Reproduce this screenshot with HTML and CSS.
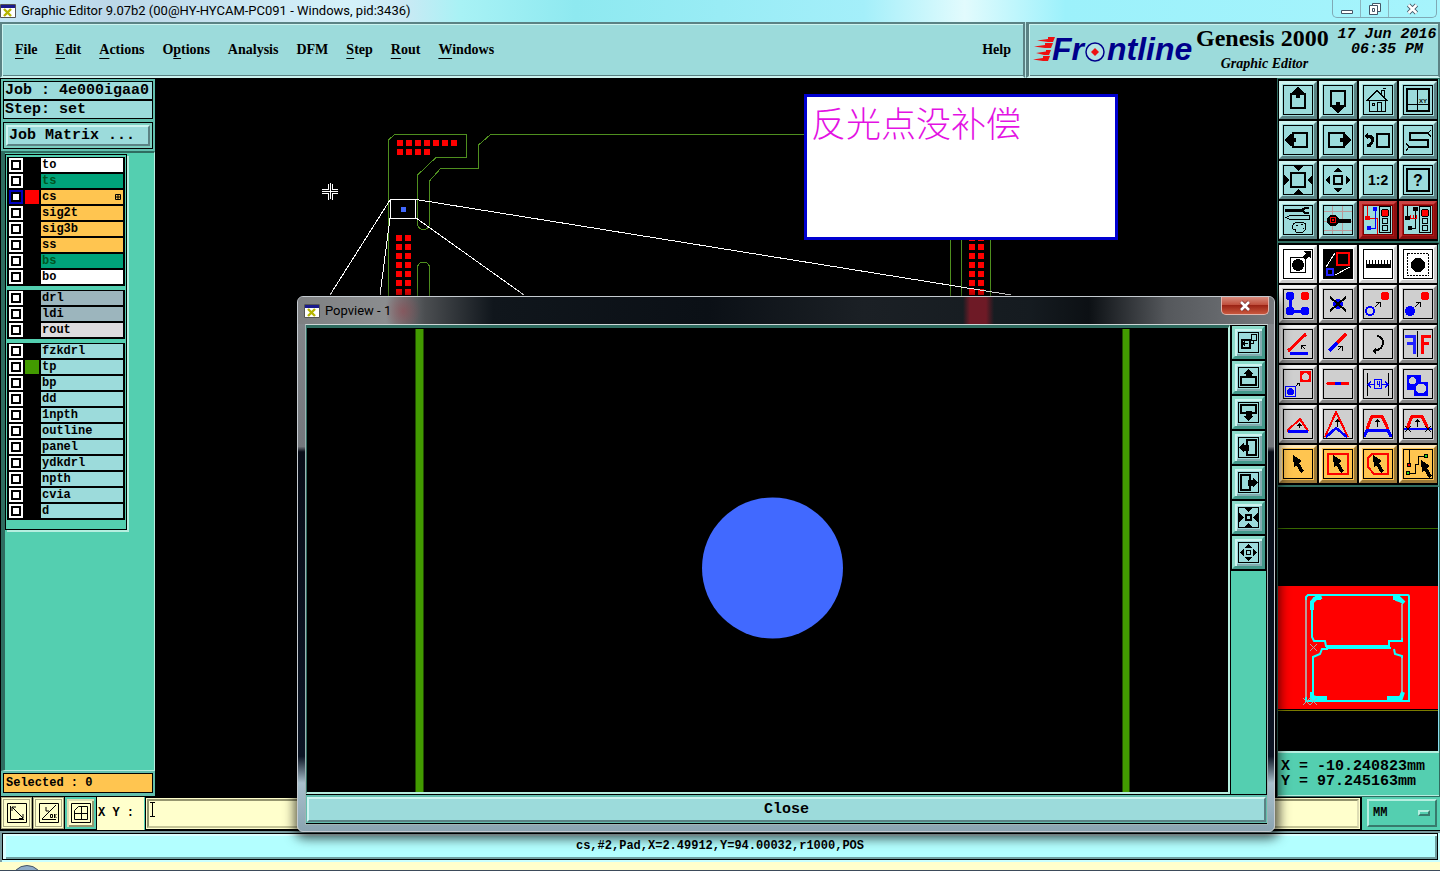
FILE: index.html
```html
<!DOCTYPE html>
<html lang="en">
<head>
<meta charset="utf-8">
<title>Graphic Editor 9.07b2</title>
<link rel="stylesheet" href="styles.css">
</head>
<body>
<svg class="defs" aria-hidden="true">
  <defs>
    <symbol id="app" viewBox="0 0 16 14"><path fill="#fff" stroke="#555" d="M.5.5h15v13H.5z"/><path fill="#1a1a8c" d="M1 1h14v3H1z"/><path stroke="#b5b500" stroke-width="2.4" d="m4 5 7 7m0-7-7 7"/></symbol>
    <symbol id="pointer" viewBox="0 0 30 30"><path d="m10 6 9 6-3 2 5 8-3 2-5-8-2 3z"/></symbol>
    <symbol id="light" viewBox="0 0 12 28"><path fill="#9cdbdb" stroke="#000" d="M.5.5h11v26H.5z"/><circle cx="6" cy="7" r="4" fill="#f00" stroke="#000"/><circle cx="6" cy="15" r="3" fill="none" stroke="#000"/><circle cx="6" cy="22" r="3" fill="none" stroke="#000"/></symbol>
  </defs>
</svg>

<header class="titlebar">
  <svg class="app-icon"><use href="#app"/></svg>
  <h1 class="window-title">Graphic Editor 9.07b2 (00@HY-HYCAM-PC091 - Windows, pid:3436)</h1>
  <div class="window-controls">
    <button aria-label="Minimize"><svg width="14" height="14"><path fill="#fff" stroke="#456" d="M1.500 8.500h11v3h-11z"/></svg></button>
    <button aria-label="Restore"><svg width="14" height="14"><path fill="#fff" stroke="#456" d="M4.500 1.500h8v8h-8z"/><path fill="#fff" stroke="#456" d="M1.500 3.500h8v9h-8zm3 3h2v3h-2z"/></svg></button>
    <button class="wide" aria-label="Exit"><svg width="14" height="14"><path stroke="#456" stroke-width="4.500" d="m2.500 3 8 8m0-8-8 8"/><path stroke="#fff" stroke-width="2.500" d="m2.500 3 8 8m0-8-8 8"/></svg></button>
  </div>
</header>

<div class="topbar">
  <nav class="menubar">
    <button><u>F</u>ile</button><button><u>E</u>dit</button><button><u>A</u>ctions</button><button>O<u>p</u>tions</button><button>Analysis</button><button>DFM</button><button><u>S</u>tep</button><button><u>R</u>out</button><button><u>W</u>indows</button><button class="help">Help</button>
  </nav>
  <div class="brand">
    <svg class="logo" viewBox="0 -6 160 44" role="img" aria-label="Frontline">
      <g fill="#e11"><path d="M4 4.500 15 3V1h7l-2 5h-5z"/><path d="M1 10.500 12 9V7h8l-2 5h-6z"/><path d="M3 17l10-1.500V14h5l-2 5h-5z"/><path d="M0 23.500 10 22v-2h7l-2 5h-5z"/></g>
      <g fill="#00008b"><text x="19" y="24">Fr</text><text x="74" y="24">ntline</text></g>
      <circle cx="62" cy="16" r="9" fill="#b5e4e4" stroke="#00008b" stroke-width="1.500"/><path fill="#e11" d="m62 12 4 4-4 4-4-4z"/>
    </svg>
    <div class="product"><strong>Genesis 2000</strong><em>Graphic Editor</em></div>
    <time class="clock">17 Jun 2016<br>06:35 PM</time>
  </div>
</div>

<main class="workspace">
  <aside class="left-panel">
    <div class="field">Job : 4e000igaa0</div>
    <div class="field">Step: set</div>
    <div class="matrix"><button>Job Matrix ...</button></div>
    <div class="layers">
      <div class="layer-box">
        <div class="group">
          <label class="white"><input type="checkbox"><i></i><span>to</span></label>
          <label class="green"><input type="checkbox"><i></i><span>ts</span></label>
          <label class="orange"><input type="checkbox" checked><i class="red"></i><span>cs<svg class="mark" width="6" height="6"><path fill="none" stroke="#000" d="M.5.5h5v5h-5zM3 0v6M0 3h6"/></svg></span></label>
          <label class="orange"><input type="checkbox"><i></i><span>sig2t</span></label>
          <label class="orange"><input type="checkbox"><i></i><span>sig3b</span></label>
          <label class="orange"><input type="checkbox"><i></i><span>ss</span></label>
          <label class="green"><input type="checkbox"><i></i><span>bs</span></label>
          <label class="white"><input type="checkbox"><i></i><span>bo</span></label>
        </div>
        <div class="group">
          <label class="slate"><input type="checkbox"><i></i><span>drl</span></label>
          <label class="slate"><input type="checkbox"><i></i><span>ldi</span></label>
          <label class="gray"><input type="checkbox"><i></i><span>rout</span></label>
        </div>
        <div class="group">
          <label><input type="checkbox"><i></i><span>fzkdrl</span></label>
          <label><input type="checkbox"><i class="leaf"></i><span>tp</span></label>
          <label><input type="checkbox"><i></i><span>bp</span></label>
          <label><input type="checkbox"><i></i><span>dd</span></label>
          <label><input type="checkbox"><i></i><span>1npth</span></label>
          <label><input type="checkbox"><i></i><span>outline</span></label>
          <label><input type="checkbox"><i></i><span>panel</span></label>
          <label><input type="checkbox"><i></i><span>ydkdrl</span></label>
          <label><input type="checkbox"><i></i><span>npth</span></label>
          <label><input type="checkbox"><i></i><span>cvia</span></label>
          <label><input type="checkbox"><i></i><span>d</span></label>
        </div>
      </div>
    </div>
    <div class="selected">Selected : 0</div>
  </aside>

  <section class="canvas">
    <svg class="board" shape-rendering="crispEdges">
      <g transform="translate(-155 -78)" fill="none">
        <g stroke="#4f8f1f">
          <path d="M388.500 320V140l6-5.500h72v23H436L417.500 175v50q1 4 6 4.500 5-.5 6-5V181l11-12.500h38V145l12-10.500h315"/>
          <path d="M417.500 320v-53q1-5 6-5t6 5v53M950.500 239v80M961.500 239v80M990.500 239v80"/>
        </g>
        <g stroke="#f00" stroke-width="6">
          <path stroke-dasharray="6 3" d="M397 143h60M397 152h33"/>
          <path stroke-dasharray="6 3" d="M399 235v60M408 235v60M972 235v60M981 235v60"/>
        </g>
        <path stroke="#fff" d="M390.500 199.500h25v19h-25zM390 200l-60 95M390 218l-10 77M416 199.500 1011 295M416 218l108 77"/>
        <path fill="#4169ff" d="M401 207h5v5h-5z"/>
        <path stroke="#fff" d="M322 189.500h6v-6M322 193.500h6v6M338 189.500h-6v-6M338 193.500h-6v6M322 191.500h16M330.500 183v16"/>
      </g>
    </svg>
    <p class="note" lang="zh">反光点没补偿</p>
  </section>

  <aside class="right-panel">
    <div class="tools">
      <button aria-label="Pan up"><svg><path class="b2" d="M8 9h14v14H8z"/><path d="M15 2l6 5v2h-4v4h-4V9H9V7z"/></svg></button>
      <button aria-label="Pan down"><svg><path class="b2" d="M8 6h14v15H8z"/><path d="M15 28l6-5v-2h-4v-4h-4v4H9v2z"/></svg></button>
      <button aria-label="Home"><svg><path class="b1" d="M4 15.500 14 5.500l10 10zM6.500 15v11.500h16V15M14.500 26v-8.500h4V26M9.500 18.500h2v2h-2zM18.500 9V5.500h3V12M20 3.500h3"/></svg></button>
      <button aria-label="Coordinates"><svg><path class="b2" d="M4 4h22v22H4z"/><path class="b1" d="M14.500 3v24M3 19.500h23"/><text x="16" y="18" font-size="6">XY</text></svg></button>
      <button aria-label="Pan left"><svg><path class="b2" d="M10 8h14v14H10z"/><path d="M2 15l5-6h2v4h4v4H9v4H7z"/></svg></button>
      <button aria-label="Pan right"><svg><path class="b2" d="M6 8h15v14H6z"/><path d="M28 15l-5-6h-2v4h-4v4h4v4h2z"/></svg></button>
      <button aria-label="Previous view"><svg><path class="b2" d="M14 9h12v13H14z"/><path fill="none" stroke="#000" stroke-width="3" d="M4 11h3l2 2v4l-2 3H4"/><path d="M1 11l4-4v8z"/></svg></button>
      <button aria-label="Serpentine"><svg><path class="b2" d="M25 8H7v7h18v7H6"/><path class="b1" d="m28 5-3 3 3 4M3 18l3 4-3 4"/></svg></button>
      <button aria-label="Zoom in"><svg><path class="b2" d="M8 8h14v14H8z"/><path d="M10 1h10l-5 5zM10 29h10l-5-5zM1 10v10l5-5zM29 10v10l-5-5z"/></svg></button>
      <button aria-label="Zoom out"><svg><path class="b2" d="M11 11h8v8h-8z"/><path d="M10 7h10l-5-4zM10 23h10l-5 4zM7 10v10l-4-5zM23 10v10l4-5z"/></svg></button>
      <button aria-label="Actual scale"><svg><text x="5" y="20" font-size="14">1:2</text></svg></button>
      <button aria-label="Query"><svg><path class="b2" d="M4 4h22v22H4z"/><text x="10" y="21" font-size="16">?</text></svg></button>
      <button aria-label="Settings"><svg><path d="M2 4h17v3H2z"/><path fill="none" stroke="#000" stroke-width="2" d="M26 3h-4l-3 2 3 3h4"/><path class="b1" d="M3 12.500l4-2h19v4H7zM10 24q-2-7 6-7 8 0 7 5-1 6-7 6-4 0-3-3zM13 20.500h2M18 19.500h2M20 23.500h1"/></svg></button>
      <button aria-label="Snap"><svg><path stroke="#b99" d="M9.500 0v30M19.500 0v30M0 6.500h30M0 16.500h30M0 25.500h30"/><circle cx="10" cy="15.500" r="6"/><path d="M10 14h18v4H10z"/><path fill="none" stroke="#e00" d="M7.500 12.500h5v5h-5zM9.500 14.500h1v1h-1z"/></svg></button>
      <button class="alert" aria-label="Stop on net"><svg><path fill="none" stroke="#e00" d="M4.500 0v13.500h10V29"/><path fill="none" stroke="#00f" d="M12.500 4v19.500H6"/><circle cx="4.500" cy="13" r="2.500" fill="#e00"/><circle cx="12" cy="4" r="2.500" fill="#00f"/><circle cx="6" cy="23" r="2.500" fill="#00f"/><use href="#light" x="16" y="1" width="12" height="28"/></svg></button>
      <button class="alert" aria-label="Stop on error"><svg><path class="b1" d="M4.500 0v13M12.500 4v19.500H8"/><path fill="none" stroke="#e00" d="M6 13.500h8M7.500 10v4M10.500 10v4M13.500 10v4"/><circle cx="4.500" cy="13" r="2.500"/><circle cx="12.500" cy="4" r="2.500"/><circle cx="7" cy="23" r="2.500"/><use href="#light" x="16" y="1" width="12" height="28"/></svg></button>
    </div>
    <div class="tools gray-tools">
      <button class="on" aria-label="Select feature"><svg><path class="b1" d="M7.500 8.500h15v15h-15z"/><circle cx="15" cy="16" r="6"/><path d="M19 8l4-4-3-2h8v8l-2-3-4 4z"/></svg></button>
      <button class="on" aria-label="Popview"><svg><path d="M0 0h30v30H0z"/><path fill="none" stroke="#f00" stroke-width="2" d="M14 4h12v12H14z"/><path fill="none" stroke="#22f" stroke-width="2" d="M4 20h6v6H4z"/><path stroke="#fff" d="m3 18 9-14M12 26l15-8"/></svg></button>
      <button class="on" aria-label="Measure"><svg><path d="M3 15h25v4H3z"/><path stroke="#000" stroke-width="5" stroke-dasharray="1 2" d="M3 13h25"/></svg></button>
      <button class="on" aria-label="Area select"><svg><path class="b1" stroke-dasharray="2 1" d="M4.500 4.500h21v22h-21z"/><circle cx="15" cy="16" r="7"/></svg></button>
      <button aria-label="Net"><svg><path fill="none" stroke="#00f" stroke-width="3" d="M7 7v15h15"/><g fill="#00f"><circle cx="7" cy="7" r="4.500"/><circle cx="7" cy="22" r="4.500"/><circle cx="22" cy="22" r="4.500"/></g><circle cx="22" cy="7" r="4.500" fill="#f00"/></svg></button>
      <button aria-label="Delete"><svg><circle cx="15" cy="15" r="5" fill="#00f"/><path stroke="#000" stroke-width="2" d="m7 8 16 14M23 8 7 22"/></svg></button>
      <button aria-label="Move"><svg><circle cx="22" cy="7" r="4.500" fill="#f00"/><circle cx="7" cy="22" r="4" fill="none" stroke="#00f" stroke-width="2"/><path class="b1" d="m12 18 5-5m-4 0.500h4v4"/></svg></button>
      <button aria-label="Copy"><svg><circle cx="22" cy="7" r="4.500" fill="#f00"/><circle cx="7" cy="22" r="5" fill="#00f"/><path class="b1" d="m12 18 5-5m-4 0.500h4v4"/></svg></button>
      <button aria-label="Angle"><svg><path stroke="#f00" stroke-width="3" d="M5 22 23 5"/><path stroke="#00f" stroke-width="3" d="M7 24.500h18"/><path class="b1" d="m22 20-4-4m0.500 4v-4h4"/></svg></button>
      <button aria-label="Extend"><svg><path stroke="#f00" stroke-width="3" d="m14 14 9-9"/><path stroke="#00f" stroke-width="3" d="m6 22 8-8"/><path class="b1" d="m15 21 4-4m-4 0.500h4v4"/></svg></button>
      <button aria-label="Rotate"><svg><path fill="none" stroke="#000" stroke-width="2" d="M14 7q6 1 6 7t-9 8"/><path d="m9 22 4-4v7z"/></svg></button>
      <button aria-label="Mirror"><svg><path fill="none" stroke="#22f" stroke-width="3" d="M2 7.500h9V25M4 14.500h7"/><path class="b1" d="M14.500 2v26"/><path fill="none" stroke="#f00" stroke-width="3" d="M28 7.500h-9V25M26 14.500h-7"/></svg></button>
      <button aria-label="Resize"><svg><path fill="#f00" d="M17 2h11v11H17z"/><circle cx="22.500" cy="7.500" r="3.500" fill="#cfcfcf"/><path fill="none" stroke="#00f" d="M2.500 17.500h10v10h-10z"/><circle cx="7.500" cy="22.500" r="3.500" fill="#00f"/><path class="b1" d="m13 17 3-3m-2 0.500h2v2"/></svg></button>
      <button aria-label="Break"><svg><path stroke="#f00" stroke-width="3" stroke-linecap="round" d="M5 14.500h20"/><path stroke="#00f" stroke-width="3" d="M12 14.500h6"/></svg></button>
      <button aria-label="Spacing"><svg><path class="b1" d="M4.500 4v23M25.500 4v23"/><path fill="none" stroke="#00f" d="M11.500 10.500h7v9h-7zM5 15.500h6M19 15.500h6M8 12.500l-3 3 3 3M22 12.500l3 3-3 3M14.500 12v3.500h2V12m0 3v3"/></svg></button>
      <button aria-label="Union"><svg><path fill="#00f" d="M4 6h14v7h7v14H11v-6H4z"/><circle cx="9.500" cy="11.500" r="3.500" fill="#cfcfcf"/><circle cx="18" cy="19.500" r="5" fill="#cfcfcf"/></svg></button>
      <button aria-label="Low slope"><svg><path fill="none" stroke="#f00" stroke-width="2" d="m4 22 13-12 8 12"/><path stroke="#00f" stroke-width="3" d="M5 22.500h20"/><path class="b1" d="M16.500 19v-4m-2 2 2-2 2 2"/></svg></button>
      <button aria-label="High slope"><svg><path fill="none" stroke="#f00" stroke-width="2" d="M2 28 13 3l12 25"/><path fill="none" stroke="#00f" stroke-width="2.500" d="m3 28 10-9 11 9"/><path class="b1" d="M14.500 18v-7m-2 2 2-2 2 2"/></svg></button>
      <button aria-label="Trapezoid"><svg><path fill="none" stroke="#f00" stroke-width="3" d="M4 20 9 7h10l6 13"/><path fill="none" stroke="#00f" stroke-width="3" d="m1 28 3-7h21l3 7"/><path class="b1" d="M14.500 18v-7m-2 2 2-2 2 2"/></svg></button>
      <button aria-label="Cut trapezoid"><svg><path fill="none" stroke="#f00" stroke-width="3" d="M4 20 9 7h10l6 13"/><path stroke="#00f" stroke-width="2" d="M0 20h30"/><path class="b1" d="M14.500 18v-7m-2 2 2-2 2 2M2 17l6 6m0-6-6 6M22 17l6 6m0-6-6 6"/></svg></button>
      <button class="gold" aria-label="Select"><svg><use href="#pointer" width="30" height="30"/></svg></button>
      <button class="gold" aria-label="Select in rectangle"><svg><path fill="none" stroke="#f00" stroke-width="2" d="M5 5h20v20H5z"/><use href="#pointer" width="30" height="30"/></svg></button>
      <button class="gold" aria-label="Select in polygon"><svg><path fill="none" stroke="#f00" stroke-width="2" d="M9 5h16v20H11l-6-7V9z"/><use href="#pointer" width="30" height="30"/></svg></button>
      <button class="gold" aria-label="Select net"><svg><path class="b1" d="M6.500 0v16M6 24.500h6.500v-9h3v-8H23"/><g stroke="#000"><circle cx="23" cy="7" r="2" fill="#2d2"/><circle cx="5" cy="24" r="2" fill="#2d2"/><circle cx="6" cy="16" r="2" fill="#e00"/></g><use href="#pointer" x="8" y="5" width="30" height="30"/></svg></button>
    </div>
    <div class="overview">
      <svg viewBox="0 0 160 125" preserveAspectRatio="none">
        <path fill="#f00" d="M0 0h160v123H0z"/><path stroke="#7b7b00" d="M0 124.500h160"/>
        <g fill="none" stroke="#1ff" stroke-width="2">
          <path d="M28 14v-3l2-2h100q1 0 1 2v104H28v-4M42 9l1 3h-7l-2 4v35l2 4h11l1 5h63v-5h13v-4M117 9l1 5 6 2M48 62h65M124 72v-2l-7-2-1-5M50 63h-6l-2 5-7 3v39l6 2h8M110 114v-3h12l2-4"/>
        </g>
        <path fill="none" stroke="#b99" stroke-width="2" d="M28 14v97M124 18v34M124 72v36"/>
        <path fill="none" stroke="#1ff" stroke-width="4" d="M34 24v-8l4-4h5M115 12h6l5 5M34 106v6h15M109 112h14l2-6"/>
        <path fill="none" stroke="#aaa" d="m32 58 7 7m0-7-7 7M25 112l7 7m0-7-7 7M32 112l7 7m0-7-7 7"/>
      </svg>
    </div>
    <output class="position">X = -10.240823mm<br>Y = 97.245163mm</output>
  </aside>
</main>

<form class="entry">
  <button type="button" class="mode" aria-label="Diagonal"><svg width="20" height="20"><path fill="none" stroke="#000" d="M.5.500h19v19H.5zM3.500 3v13.500H17M5 4l11 11M5 8V4h4M12 15.500h4V11"/></svg></button>
  <button type="button" class="mode" aria-label="Angle mode"><svg width="20" height="20"><path fill="none" stroke="#000" d="M.5.500h19v19H.5zM3 16.500h14M3 16 17 2M7 4v4h3M11.500 11.500h2v3h-2zM15.500 11v4m2-4-2 2 2 2"/></svg></button>
  <button type="button" class="mode active" aria-label="Grid mode"><svg width="20" height="20"><path fill="none" stroke="#000" d="M.5.500h19v19H.5zM3.500 16.500v-9l4-4h9v13zM10.500 3v14M3 10.500h14"/></svg></button>
  <label for="xy">X Y :</label>
  <input id="xy" type="text">
  <div class="unit"><button type="button">MM<i></i></button></div>
</form>
<footer class="status"><p>cs,#2,Pad,X=2.49912,Y=94.00032,r1000,POS</p></footer>
<div class="taskbar"><i></i></div>
<svg class="caret" width="7" height="16" shape-rendering="crispEdges"><path stroke="#000" fill="none" d="M1 .5h5M1 14.500h5M3.500 0v15"/></svg>

<section class="popview">
  <header><svg class="app-icon"><use href="#app"/></svg><h2>Popview - 1</h2><button aria-label="Close window"><svg width="12" height="12"><path stroke="#733" stroke-width="4" d="m2 2 8 8m0-8-8 8"/><path stroke="#fff" stroke-width="2.500" d="m2 2 8 8m0-8-8 8"/></svg></button></header>
  <div class="pop-body">
    <div class="pop-main">
      <svg class="pop-view" viewBox="0 0 920 464"><path fill="#429a00" d="M108 1h8v463h-8zM815 1h7v463h-7z"/><circle cx="465" cy="240" r="70.500" fill="#4169ff"/></svg>
      <div class="pop-tools">
        <button aria-label="Link view"><svg><path class="b2" d="M4 8h8v8H4z"/><path class="b1" d="M13.500 2.500h5v6h-5zM12 11.500h3.500V9M10 11.500H5m2-2-2 2 2 2"/></svg></button>
        <button aria-label="Up"><svg><path class="b2" d="M3 10h15v8H3z"/><path d="m10.500 2 5 5h-2v4h-6V7h-2z"/></svg></button>
        <button aria-label="Down"><svg><path class="b2" d="M3 3h15v8H3z"/><path d="m10.500 19 5-5h-2V9h-6v5h-2z"/></svg></button>
        <button aria-label="Left"><svg><path class="b2" d="M9 3h9v15H9z"/><path d="m1 10.500 5-5v2h5v6H6v2z"/></svg></button>
        <button aria-label="Right"><svg><path class="b2" d="M3 3h9v15H3z"/><path d="m20 10.500-5-5v2h-5v6h5v2z"/></svg></button>
        <button aria-label="In"><svg><path class="b2" d="M8 8h5v5H8z"/><path d="M6 1h9l-4.500 4zM6 20h9l-4.500-4zM1 6v9l5-4.500zM20 6v9l-5-4.500z"/></svg></button>
        <button aria-label="Out"><svg><path class="b1" d="M8.500 8.500h4v4h-4z"/><path d="M7 6h7l-3.500-4zM7 15h7l-3.500 4zM6 7v7l-4-3.500zM15 7v7l4-3.500z"/></svg></button>
      </div>
    </div>
    <div class="pop-close"><button>Close</button></div>
  </div>
</section>
</body>
</html>
```

FILE: styles.css
```css
* { box-sizing: border-box; }
:root {
  --teal: #54cfb0;
  --aqua: #9cdbdb;
  --light: #cdf4f0;
  --dark: #5b8284;
  --cream: #ffffcc;
  --mono: "Liberation Mono", monospace;
  --serif: "Liberation Serif", serif;
}
body {
  margin: 0;
  height: 100vh;
  min-height: 640px;
  display: flex;
  flex-direction: column;
  position: relative;
  overflow: hidden;
  background: #000;
  color: #000;
  font-family: var(--mono);
  font-weight: bold;
}
button { font: inherit; color: inherit; padding: 0; margin: 0; border: 0; background: none; }
h1, h2, p { margin: 0; }
.defs { position: absolute; width: 0; height: 0; }
.app-icon { width: 16px; height: 14px; flex: none; }

.titlebar {
  height: 22px;
  flex: none;
  display: flex;
  align-items: center;
  gap: 5px;
  background: linear-gradient(90deg, #c4e6f5 0, #bcd7e8 8%, #d5f2fa 24%, #cbe9f4 28%, #a8f2f5 32%, #8ee9f0 40%, #a4effa 60%, #e2fbfd 67%, #9cf1fb 74%, #a6f4fc 100%);
}
.window-title { flex: 1; font: 13px/20px Roboto, "Open Sans", sans-serif; }
.window-controls { display: flex; align-self: flex-start; height: 18px; margin-right: 3px; border: 1px solid #7fa9b5; border-top: 0; border-radius: 0 0 5px 5px; }
.window-controls button { width: 28px; border-right: 1px solid #8ab6c0; display: grid; place-items: center; }
.window-controls .wide { width: 47px; border: 0; }

.topbar { height: 56px; flex: none; display: flex; gap: 1px; background: #b9e6e6; }
.menubar, .brand { background: var(--aqua); border: 2px solid var(--dark); border-bottom-color: var(--light); box-shadow: inset 0 1px var(--light), inset 1px 0 var(--light), inset 0 -1px var(--dark); }
.menubar { flex: 1; display: flex; align-items: center; gap: 18px; padding: 0 12px 0 13px; font: bold 14px/20px var(--serif); }
.menubar u { text-underline-offset: 4px; }
.menubar .help { margin-left: auto; }
.brand { flex: none; width: 414px; display: flex; align-items: flex-start; padding: 2px 1px 0 4px; border-left-width: 3px; }
.logo { width: 160px; height: 44px; margin-top: 4px; flex: none; font: italic bold 32px "Liberation Sans", sans-serif; }
.product { width: 144px; padding-left: 3px; white-space: nowrap; }
.product strong { display: block; font: bold 24px/24px var(--serif); }
.product em { display: block; font: italic bold 14px/20px var(--serif); text-align: center; padding: 4px 4px 0 0; }
.clock { flex: 1; font: italic bold 15px/15px var(--mono); text-align: center; white-space: nowrap; padding-top: 1px; }

.workspace { flex: 1; min-height: 0; display: flex; }
.left-panel { width: 155px; flex: none; display: flex; flex-direction: column; background: #62bfae; margin: 1px 0 1px; padding: 2px 2px 3px 3px; border-left: 1px solid #000; font-size: 15px; line-height: 18px; }
.field { border: 1px solid #000; background: var(--aqua); height: 19px; padding-left: 1px; white-space: nowrap; margin: 0 0 0 -1px; }
.matrix { border: 1px solid #000; background: #7ccfc0; margin: 3px 0 2px -1px; padding: 2px; height: 27px; }
.matrix button { display: block; width: 100%; height: 21px; text-align: left; background: var(--aqua); border: 2px solid; border-color: var(--light) var(--dark) var(--dark) var(--light); padding-left: 1px; line-height: 16px; }
.layers { flex: 1; background: var(--teal); margin: 0 -2px 1px -3px; border: 2px solid #2f6c60; border-left-width: 4px; border-right: 1px solid #b6efe0; border-bottom: 1px solid #b6efe0; }
.layer-box { width: 122px; border: 1px solid #000; background: var(--teal); box-shadow: 2px 2px #b6efe0; padding: 2px 1px 9px 1px; margin-top: 1px; }
.group { background: #000; margin-bottom: 4px; padding: 1px 2px 0 2px; }
.group:last-child { margin: 0; }
.group label { display: flex; gap: 2px; height: 16px; padding-bottom: 2px; }
.group input { appearance: none; width: 14px; height: 14px; margin: 0; background: #fff; border: 2px solid #fff; outline: 2px solid #000; outline-offset: -4px; }
.group input:checked { border-color: #0000c0; }
.group i { width: 14px; }
.group .red { background: #f00; }
.group .leaf { background: #429a00; }
.group span { flex: 1; display: flex; align-items: center; background: var(--aqua); font-size: 12px; line-height: 14px; padding: 0 2px 0 1px; }
.group .white span { background: #fff; }
.group .green span { background: #00a37a; color: #052; }
.group .orange span { background: #ffc550; }
.group .slate span { background: #9cb5bd; }
.group .gray span { background: #dedbde; }
.mark { margin-left: auto; }
.selected { height: 20px; border: 1px solid #000; background: #ffc550; font-size: 12px; padding-left: 2px; margin: 1px 0 0 -1px; }

.canvas { flex: 1; min-width: 0; position: relative; background: #000; overflow: hidden; }
.board { display: block; width: 100%; height: 100%; }
.note { position: absolute; left: 649px; top: 16px; width: 314px; height: 146px; padding: 4px; border: 3px solid #0000d0; background: #fff; color: #e312e3; font: 300 35px/42px "Noto Sans CJK SC", sans-serif; }

.right-panel { width: 163px; flex: none; display: flex; flex-direction: column; padding: 1px 1px 0; background: #2f6c60; }
.tools { display: grid; grid-template-columns: repeat(4, 38px); gap: 2px; padding: 2px 0 2px 1px; background: #000; border-right: 1px solid #62bfae; border-bottom: 2px solid #2f6c60; }
.tools button { height: 38px; border: 3px solid; border-color: var(--light) var(--dark) var(--dark) var(--light); background: var(--aqua); padding: 1px; }
.tools svg, .pop-tools svg { display: block; width: 30px; height: 30px; outline: 1px solid #000; outline-offset: -1px; font: bold 14px "Liberation Sans", sans-serif; overflow: hidden; shape-rendering: crispEdges; }
.tools .alert { border-color: #c44 #8a1010 #8a1010 #c44; background: #b01818; }
.tools .alert svg { background: var(--aqua); outline-color: #700; }
.gray-tools { padding: 0 0 2px 1px; border-top: 2px solid #000; }
.gray-tools button { background: #cfcfcf; border-color: #f2f2f2 #858585 #858585 #f2f2f2; }
.gray-tools .on { background: #fff; border-color: #fff #ccc #ccc #fff; }
.gray-tools .gold { background: #ffc550; border-color: #ffe9ba #9c7a39 #9c7a39 #ffe9ba; }
.b1 { fill: none; stroke: #000; stroke-width: 1; }
.b2 { fill: none; stroke: #000; stroke-width: 2; }
.overview { flex: 1; min-height: 0; background: #000; border-right: 1px solid #8de; display: flex; flex-direction: column; justify-content: center; }
.overview::before { content: ""; height: 57px; border-top: 1px solid #386900; }
.overview svg { display: block; width: 100%; height: 125px; }
.position { height: 45px; flex: none; background: var(--teal); border-top: 2px solid #b6efe0; border-bottom: 1px solid #b6efe0; font-size: 15px; line-height: 15px; padding: 6px 3px; margin: 0 0 1px; white-space: nowrap; }

.entry { height: 34px; flex: none; display: flex; margin: 0 0 0 1px; background: #000; padding: 0 0 1px; font-size: 12px; }
.mode { width: 31px; height: 32px; flex: none; margin-right: 1px; background: var(--cream); border: 3px double #a9a983; display: grid; place-items: center; }
.mode.active { border: 2px solid var(--teal); box-shadow: inset 2px 2px #deddb4, inset -2px -2px #96966f; }
.entry label { width: 48px; background: var(--cream); line-height: 32px; padding-left: 1px; border-right: 1px solid var(--teal); }
.entry input { flex: 1; min-width: 0; border: 2px solid #96966f; border-color: #96966f #deddb4 #c5c597 #96966f; outline: 1px solid var(--cream); outline-offset: 0; background: var(--cream); margin: 2px 1px 2px 2px; border-radius: 0; font: bold 12px var(--mono); }
.unit { width: 80px; padding: 1px 2px 1px 5px; background: var(--teal); border-left: 2px solid #000; }
.unit button { width: 70px; height: 28px; margin: 1px 0; display: flex; align-items: center; justify-content: space-between; padding: 0 5px 0 4px; border: 2px solid; border-color: #b6efe0 #377a6c #377a6c #b6efe0; }
.unit i { width: 12px; height: 6px; border: 2px solid; border-color: #b6efe0 #377a6c #377a6c #b6efe0; }
.status { height: 31px; flex: none; background: #c9ffff; border-top: 2px solid #7a9c9f; border-left: 2px solid #7a9c9f; padding: 0 2px 2px 0; }
.status p { height: 27px; background: #b3ffff; border: 1px solid #000; box-shadow: inset 3px 2px #d9ffff, inset -2px -2px #6f9fa0; text-align: center; font-size: 12px; line-height: 25px; }
.taskbar { height: 9px; flex: none; background: var(--cream); border-bottom: 1px solid #3b4a5a; overflow: hidden; }
.taskbar i { display: block; width: 32px; height: 32px; margin: 3px 0 0 11px; border-radius: 50%; background: #8facc8; border: 1px solid #456; }
.caret { position: absolute; left: 149px; bottom: 53px; }

.popview { position: absolute; left: 297px; right: 165px; top: 296px; bottom: 39px; display: flex; flex-direction: column; padding: 0 6px 6px 7px; border: 1px solid #c5cbd0; border-radius: 6px; background: linear-gradient(180deg, #85888c 0, #73777c 28%, #080d18 29%, #0b1424 86%, #a8c0cc 91%, #8ba4b1 100%); box-shadow: 1px 3px 12px 3px rgb(0 0 0 / 70%); }
.popview > header { height: 27px; flex: none; display: flex; align-items: center; gap: 5px; margin: 0 -6px 0 -7px; padding: 0 5px 0 6px; border-radius: 5px 5px 0 0; background:
  radial-gradient(ellipse 18px 20px at 105px 14px, rgb(160 60 70 / 45%), transparent),
  linear-gradient(90deg, transparent 665px, #6e1a26 672px, #6e1a26 688px, transparent 696px),
  linear-gradient(90deg, #7e8082 0, #8b8d8f 9%, #4b4e51 13%, #10161c 20%, #0b1016 42%, #1b2025 58%, #151b20 75%, #0c1014 81%, #55585c 89%, #76797d 100%); }
.popview h2 { flex: 1; font: 13px/24px Roboto, "Open Sans", sans-serif; }
.popview > header button { align-self: flex-start; width: 48px; height: 18px; display: grid; place-items: center; background: linear-gradient(#d78a7c, #c1503e 45%, #9c2416 50%, #c8583e); border: 1px solid #e0b4ac; border-top: 0; border-radius: 0 0 5px 5px; }
.pop-body { flex: 1; min-height: 0; display: flex; flex-direction: column; background: #62bfae; border: 1px solid #9fb4b4; border-top-color: #ccd6d6; }
.pop-main { flex: 1; min-height: 0; display: flex; }
.pop-view { flex: 1; min-width: 0; background: #000; border: 2px solid #b6efe0; border-top: 3px solid #2f6c60; border-left: 1px solid #2f6c60; display: block; }
.pop-tools { width: 37px; flex: none; display: flex; flex-direction: column; gap: 2px; padding: 1px 1px 0 1px; background: linear-gradient(#000, #000) top / 100% 246px no-repeat, var(--teal); border-left: 1px solid #000; border-right: 1px solid #000; }
.pop-tools button { height: 33px; padding: 0; border: 3px solid; border-color: #8cdccb #43988a #43988a #8cdccb; background: var(--aqua); box-shadow: inset 2px 2px var(--light), inset -2px -2px #83acb0; display: grid; place-items: center; }
.pop-tools svg { width: 21px; height: 21px; }
.pop-close { height: 30px; flex: none; padding: 2px 1px; border-top: 1px solid #000; border-bottom: 1px solid #000; }
.pop-close button { display: block; width: 100%; height: 25px; background: var(--aqua); border: 2px solid; border-color: var(--light) var(--dark) var(--dark) var(--light); font-size: 15px; line-height: 20px; }
```
